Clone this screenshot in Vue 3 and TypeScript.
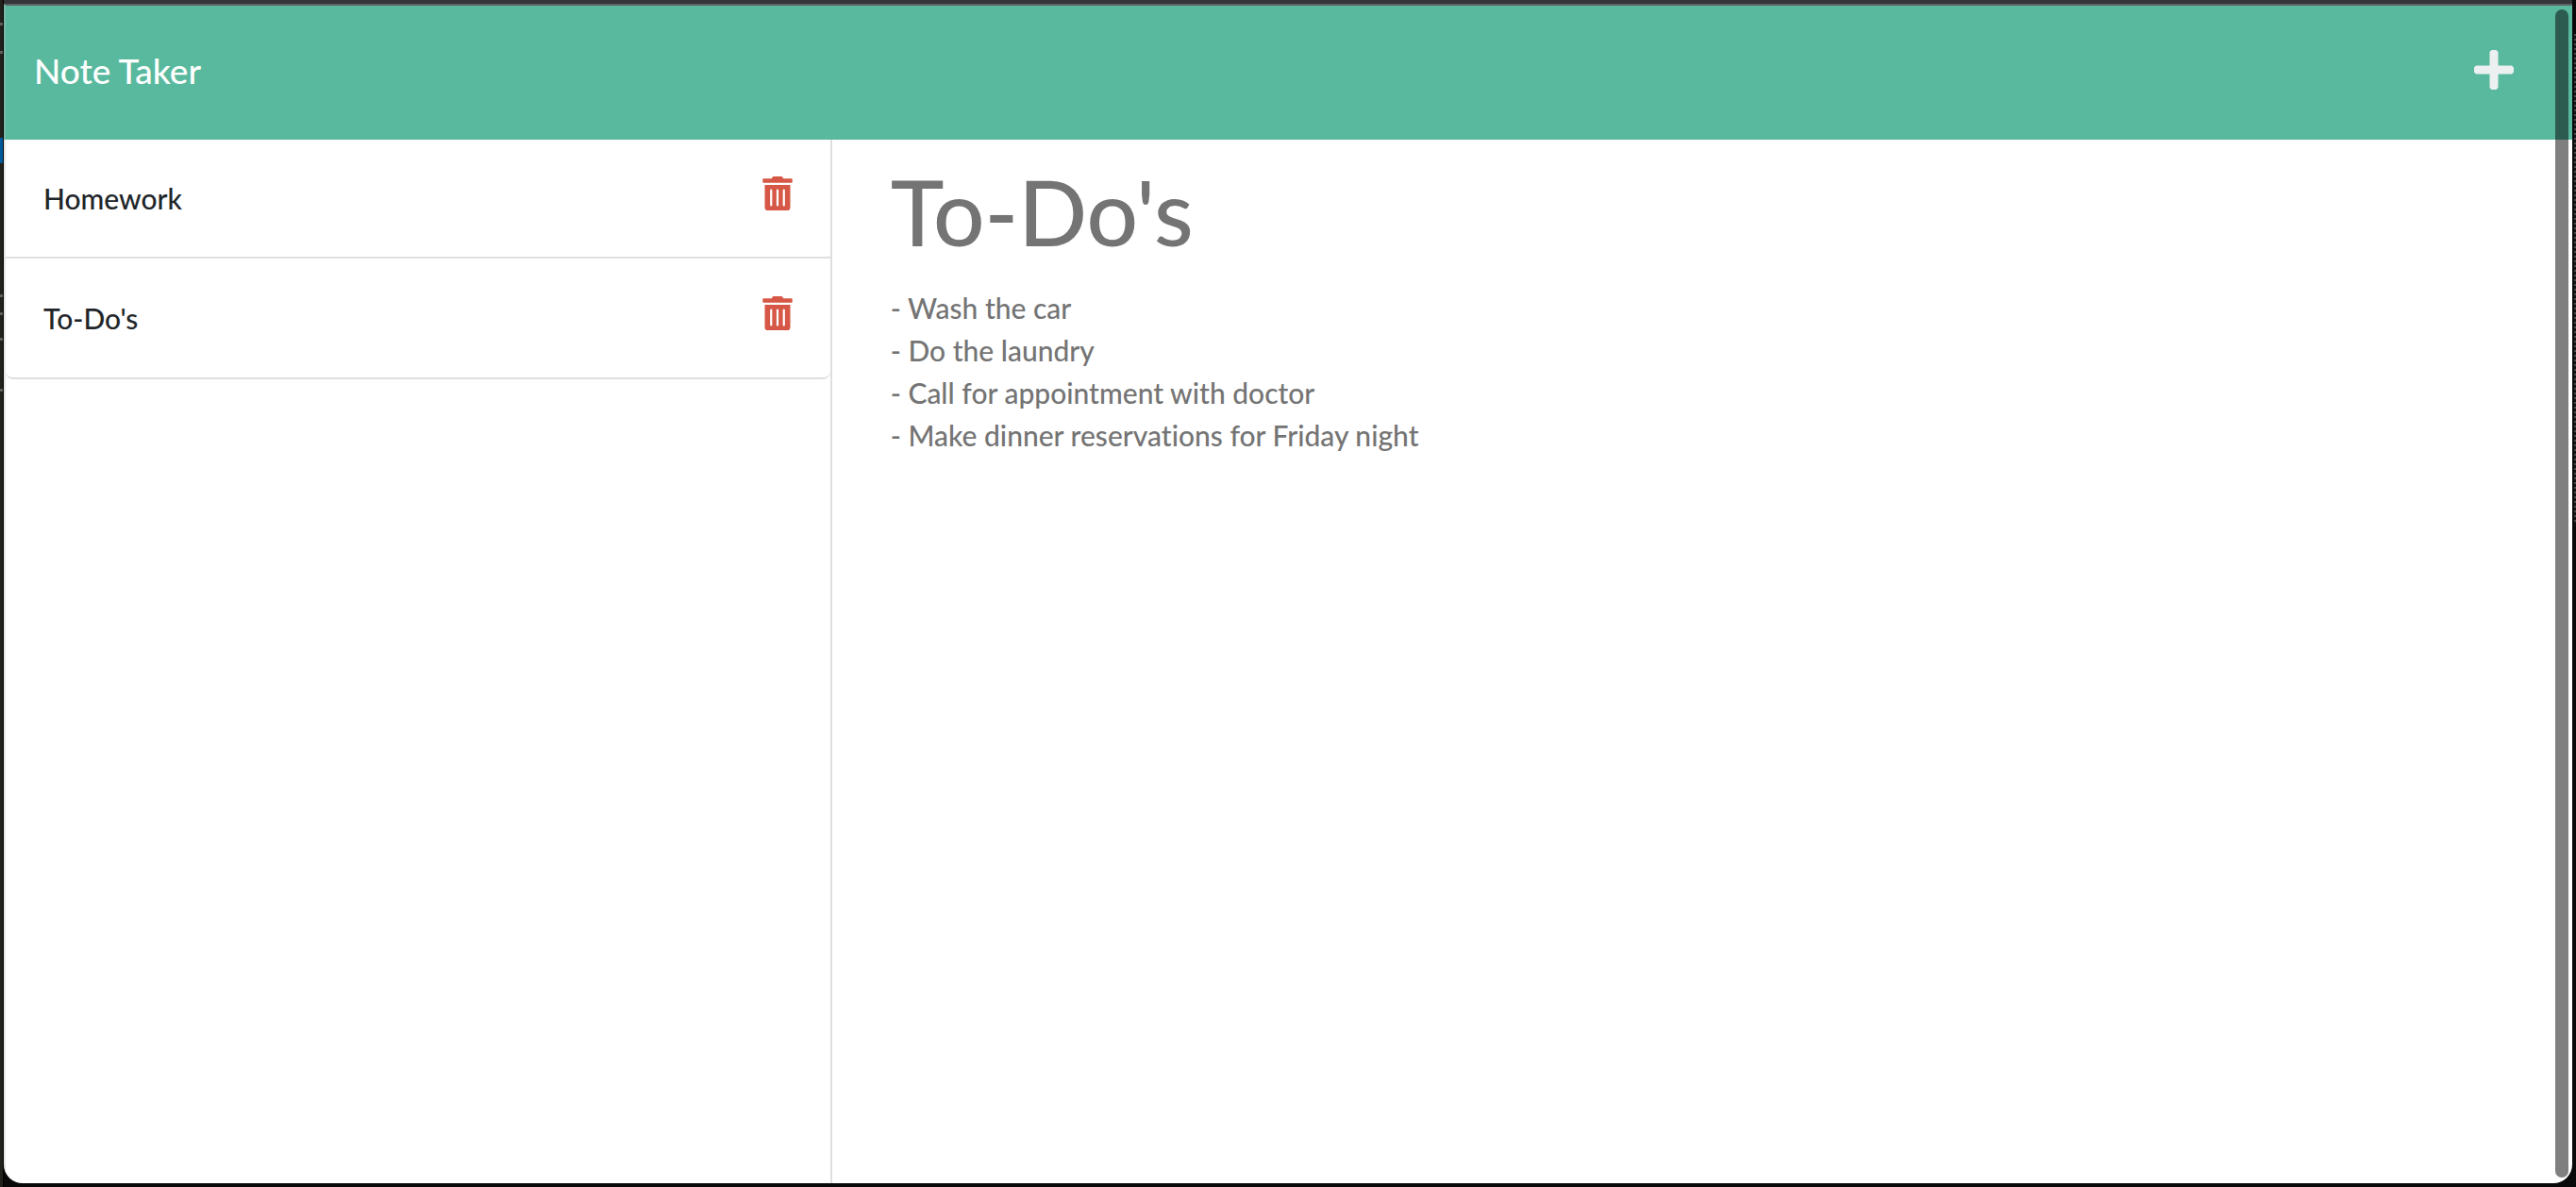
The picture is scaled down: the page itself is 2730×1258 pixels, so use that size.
<script setup lang="ts">
import { ref } from 'vue'

interface Note {
  id: number
  title: string
  text: string
}

const notes = ref<Note[]>([
  { id: 1, title: 'Homework', text: '' },
  {
    id: 2,
    title: "To-Do's",
    text: '- Wash the car\n- Do the laundry\n- Call for appointment with doctor\n- Make dinner reservations for Friday night',
  },
])

const active = ref<Note>({ ...notes.value[1] })

function open(note: Note) {
  active.value = { ...note }
}

function remove(id: number) {
  notes.value = notes.value.filter((note) => note.id !== id)
}

function create() {
  active.value = { id: Date.now(), title: '', text: '' }
}
</script>

<template>
  <div class="desktop">
    <div class="window">
      <header class="navbar">
        <a class="brand" href="#">Note Taker</a>
        <button class="icon-button create" type="button" aria-label="New note" @click="create">
          <svg class="plus" viewBox="0 0 448 512" aria-hidden="true">
            <path d="M416 208H272V64c0-17.67-14.33-32-32-32h-32c-17.67 0-32 14.33-32 32v144H32c-17.67 0-32 14.33-32 32v32c0 17.67 14.33 32 32 32h144v144c0 17.67 14.33 32 32 32h32c17.67 0 32-14.33 32-32V304h144c17.67 0 32-14.33 32-32v-32c0-17.67-14.33-32-32-32z" />
          </svg>
        </button>
      </header>
      <main class="content">
        <aside class="sidebar">
          <ul class="notes">
            <li v-for="note in notes" :key="note.id" class="note">
              <button class="note-title" type="button" @click="open(note)">{{ note.title }}</button>
              <button class="icon-button delete" type="button" :aria-label="`Delete ${note.title}`" @click="remove(note.id)">
                <svg class="trash" viewBox="0 0 448 512" aria-hidden="true">
                  <path d="M32 464a48 48 0 0 0 48 48h288a48 48 0 0 0 48-48V128H32zm272-256a16 16 0 0 1 32 0v224a16 16 0 0 1-32 0zm-96 0a16 16 0 0 1 32 0v224a16 16 0 0 1-32 0zm-96 0a16 16 0 0 1 32 0v224a16 16 0 0 1-32 0zM432 32H312l-9.4-18.7A24 24 0 0 0 281.1 0H166.8a23.72 23.72 0 0 0-21.4 13.3L136 32H16A16 16 0 0 0 0 48v32a16 16 0 0 0 16 16h416a16 16 0 0 0 16-16V48a16 16 0 0 0-16-16z" />
                </svg>
              </button>
            </li>
          </ul>
        </aside>
        <section class="editor">
          <input v-model="active.title" class="title-field" type="text" aria-label="Note title" readonly />
          <textarea v-model="active.text" class="text-field" rows="15" aria-label="Note text" readonly></textarea>
        </section>
      </main>
      <div class="scroll-thumb"></div>
    </div>
  </div>
</template>

<style>
body {
  margin: 0;
}
</style>

<style scoped>
/* the desktop behind the window shows as a thin strip on each side */
.desktop {
  box-sizing: border-box;
  display: flex;
  min-height: 100vh;
  padding: 0 4px 4px;
  font-family: Lato, 'Liberation Sans', sans-serif;
  font-size: 30px;
  font-weight: 500;
  font-variant-ligatures: none;
  line-height: 45px;
  background:
    linear-gradient(#005a9c, #005a9c) 0 146px / 3px 27px no-repeat,
    linear-gradient(#605f5b, #605f5b) 0 24px / 3px 3px no-repeat,
    linear-gradient(#605f5b, #605f5b) 0 54px / 3px 3px no-repeat,
    linear-gradient(#605f5b, #605f5b) 0 312px / 3px 3px no-repeat,
    linear-gradient(#605f5b, #605f5b) 0 331px / 3px 3px no-repeat,
    linear-gradient(#605f5b, #605f5b) 0 358px / 3px 3px no-repeat,
    linear-gradient(#605f5b, #605f5b) 0 412px / 3px 3px no-repeat,
    linear-gradient(90deg, #22211d 3px, #000 3px, #000 4px, transparent 4px) no-repeat,
    repeating-linear-gradient(#4a4a4a 0 2px, #131313 2px 5px) 100% 36px / 2px 520px no-repeat,
    #09090a;
}

.window {
  position: relative;
  display: flex;
  flex: 1;
  flex-direction: column;
  box-sizing: border-box;
  border-top: 4px solid #35363a;
  border-radius: 0 0 20px 20px;
  overflow: hidden;
  background: #fff;
}

/* translucent window outline, drawn over the page */
.window::after {
  content: '';
  position: absolute;
  inset: 0;
  border-top: 2px solid #5f6064;
  border-left: 2px solid rgba(190, 190, 190, 0.35);
  pointer-events: none;
}

.navbar {
  display: flex;
  align-items: center;
  justify-content: space-between;
  height: 140px;
  padding: 2px 62px 2px 32px;
  background: #59b99e;
}

.brand {
  padding-bottom: 2px;
  color: #fff;
  font-size: 37px;
  line-height: 56px;
  text-decoration: none;
}

.icon-button {
  display: block;
  padding: 0;
  border: 0;
  background: none;
  cursor: pointer;
}

.create {
  padding-bottom: 4px;
}

.delete {
  padding-bottom: 10px;
}

.plus {
  display: block;
  width: 42px;
  height: 48px;
  fill: #ecf0f1;
}

.trash {
  display: block;
  width: 32px;
  height: 36px;
  fill: #d65745;
}

.content {
  display: flex;
  flex: 1;
  padding-left: 2px;
}

.sidebar {
  box-sizing: border-box;
  flex: none;
  width: calc(33.333% - 31px);
  border-right: 2px solid #dfdfdf;
}

.notes {
  margin: 0;
  padding: 0;
  list-style: none;
}

.note {
  display: flex;
  align-items: center;
  justify-content: space-between;
  height: 124px;
  padding: 0 40px;
  border-bottom: 2px solid #dfdfdf;
}

.note:last-child {
  height: 126px;
  border-radius: 0 0 8px 8px;
}

.note-title {
  padding: 0;
  border: 0;
  background: none;
  color: #212529;
  font: inherit;
  text-align: left;
  cursor: pointer;
}

.editor {
  display: flex;
  flex: 1;
  flex-direction: column;
  gap: 22px;
  padding: 18px 62px 0;
}

.title-field,
.text-field {
  display: block;
  box-sizing: border-box;
  width: 100%;
  margin: 0;
  padding: 0;
  border: 0;
  outline: 0;
  background: none;
  color: #747474;
  font: inherit;
  resize: none;
}

.title-field {
  height: 116px;
  font-size: 96px;
  line-height: 116px;
}

.scroll-thumb {
  position: absolute;
  top: 6px;
  right: 4px;
  bottom: 6px;
  width: 14px;
  border-radius: 7px;
  background: rgba(0, 0, 0, 0.5);
}
</style>
